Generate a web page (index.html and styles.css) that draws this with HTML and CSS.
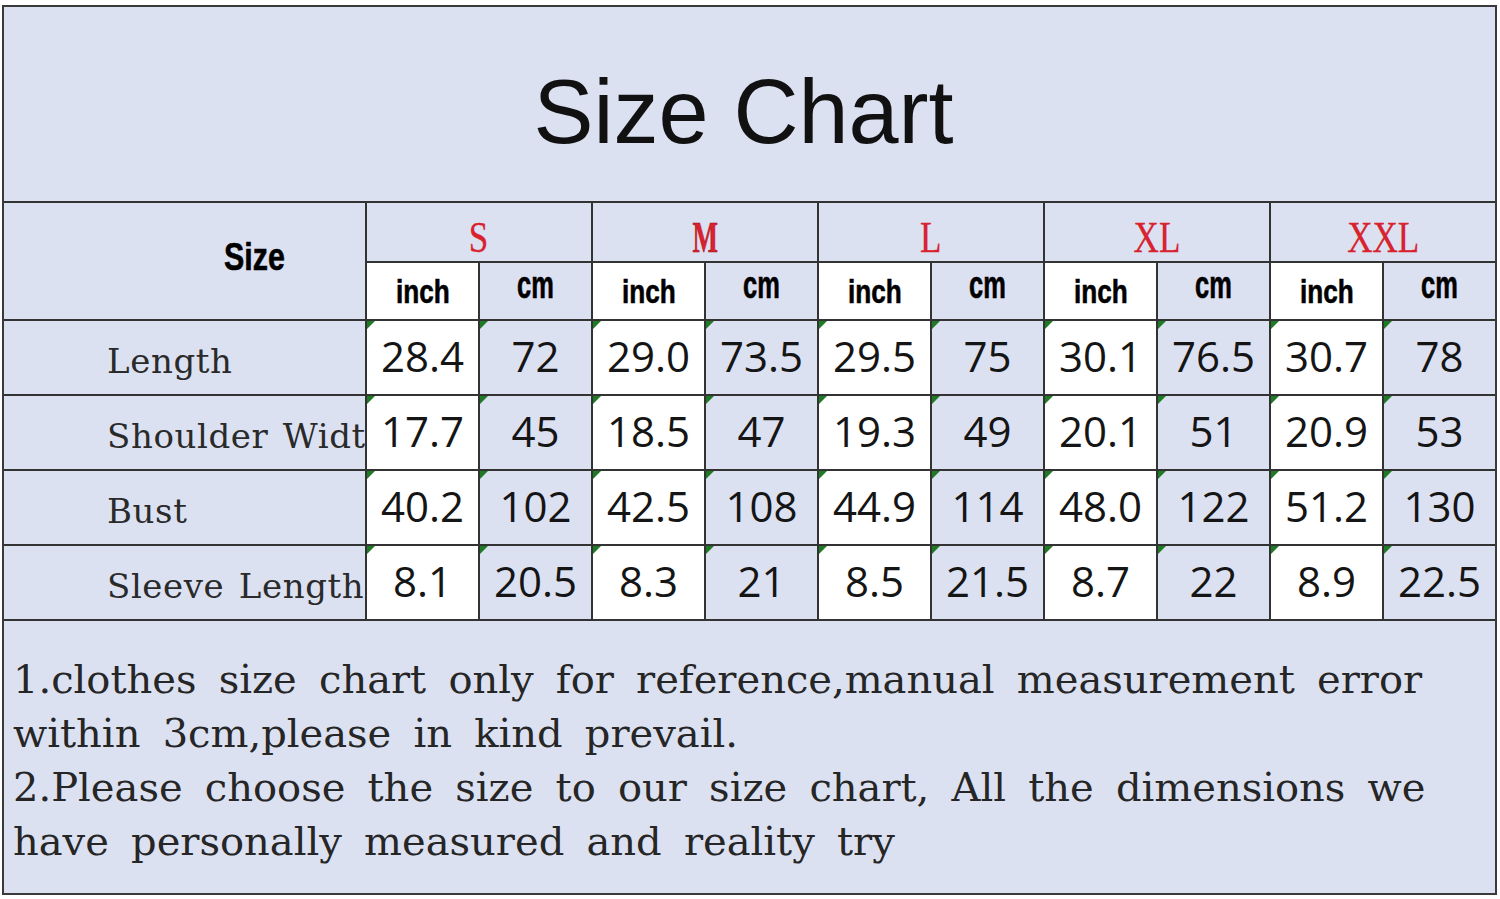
FILE: index.html
```html
<!DOCTYPE html>
<html lang="en">
<head>
<meta charset="utf-8">
<title>Size Chart</title>
<link rel="stylesheet" href="styles.css">
</head>
<body>
<div class="chart">
  <div class="title">Size Chart</div>
  <div class="grid">
    <div class="cell head-size"><span>Size</span></div>
    <div class="cell size-name"><span>S</span></div>
    <div class="cell size-name"><span class="bold-m">M</span></div>
    <div class="cell size-name"><span>L</span></div>
    <div class="cell size-name"><span>XL</span></div>
    <div class="cell size-name"><span>XXL</span></div>

    <div class="cell unit inch"><span>inch</span></div><div class="cell unit cm"><span>cm</span></div>
    <div class="cell unit inch"><span>inch</span></div><div class="cell unit cm"><span>cm</span></div>
    <div class="cell unit inch"><span>inch</span></div><div class="cell unit cm"><span>cm</span></div>
    <div class="cell unit inch"><span>inch</span></div><div class="cell unit cm"><span>cm</span></div>
    <div class="cell unit inch"><span>inch</span></div><div class="cell unit cm"><span>cm</span></div>

    <div class="cell label"><span>Length</span></div>
    <div class="cell num inch">28.4</div><div class="cell num cm">72</div>
    <div class="cell num inch">29.0</div><div class="cell num cm">73.5</div>
    <div class="cell num inch">29.5</div><div class="cell num cm">75</div>
    <div class="cell num inch">30.1</div><div class="cell num cm">76.5</div>
    <div class="cell num inch">30.7</div><div class="cell num cm">78</div>

    <div class="cell label"><span>Shoulder Width</span></div>
    <div class="cell num inch">17.7</div><div class="cell num cm">45</div>
    <div class="cell num inch">18.5</div><div class="cell num cm">47</div>
    <div class="cell num inch">19.3</div><div class="cell num cm">49</div>
    <div class="cell num inch">20.1</div><div class="cell num cm">51</div>
    <div class="cell num inch">20.9</div><div class="cell num cm">53</div>

    <div class="cell label"><span>Bust</span></div>
    <div class="cell num inch">40.2</div><div class="cell num cm">102</div>
    <div class="cell num inch">42.5</div><div class="cell num cm">108</div>
    <div class="cell num inch">44.9</div><div class="cell num cm">114</div>
    <div class="cell num inch">48.0</div><div class="cell num cm">122</div>
    <div class="cell num inch">51.2</div><div class="cell num cm">130</div>

    <div class="cell label"><span>Sleeve Length</span></div>
    <div class="cell num inch">8.1</div><div class="cell num cm">20.5</div>
    <div class="cell num inch">8.3</div><div class="cell num cm">21</div>
    <div class="cell num inch">8.5</div><div class="cell num cm">21.5</div>
    <div class="cell num inch">8.7</div><div class="cell num cm">22</div>
    <div class="cell num inch">8.9</div><div class="cell num cm">22.5</div>
  </div>
  <div class="notes">
    <p>1.clothes size chart only for reference,manual measurement error<br>within 3cm,please in kind prevail.</p>
    <p>2.Please choose the size to our size chart, All the dimensions we<br>have personally measured and reality try</p>
  </div>
</div>
</body>
</html>
```
FILE: styles.css
```css
html, body {
  margin: 0;
  padding: 0;
  background: #ffffff;
}

.chart {
  box-sizing: border-box;
  width: 1495px;
  margin: 5px 0 0 2px;
  border: 2px solid #3a3a3a;
  background: #dce1f2;
}

.title {
  box-sizing: border-box;
  height: 196px;
  border-bottom: 2px solid #333;
  display: flex;
  align-items: center;
  justify-content: center;
  padding: 15px 12px 0 0;
  font-family: "Liberation Sans", Arial, sans-serif;
  font-size: 90px;
  color: #111;
  line-height: 1;
}

.grid {
  display: grid;
  grid-template-columns: 361px repeat(10, 1fr);
  grid-template-rows: 58px 56px repeat(4, 73px);
  gap: 2px;
  background: #333;
}

.cell {
  position: relative;
  box-sizing: border-box;
  display: flex;
  align-items: center;
  justify-content: center;
  background: #dce1f2;
  overflow: hidden;
}

.inch {
  background: #ffffff;
}

.cm {
  background: #dce1f2;
}

.head-size {
  grid-row: span 2;
  justify-content: flex-start;
  padding: 0 0 9px 220px;
}

.head-size span {
  display: inline-block;
  font-family: "Liberation Sans", Arial, sans-serif;
  font-weight: bold;
  font-size: 38px;
  line-height: 1;
  color: #000;
  transform: scaleX(0.8);
  transform-origin: left center;
  -webkit-text-stroke: 0.6px #000;
}

.size-name {
  grid-column: span 2;
  padding-top: 10px;
}

.size-name span {
  display: inline-block;
  font-family: "Liberation Serif", "Times New Roman", serif;
  font-size: 45px;
  line-height: 1;
  color: #d8222e;
  transform: scaleX(0.78);
  -webkit-text-stroke: 0.3px #d8222e;
}

.size-name .bold-m {
  font-weight: bold;
  transform: scaleX(0.6);
  -webkit-text-stroke: 0.5px #9a1018;
}

.unit span {
  display: inline-block;
  font-family: "Liberation Sans", Arial, sans-serif;
  font-weight: bold;
  line-height: 1;
  color: #000;
  -webkit-text-stroke: 0.6px #000;
}

.unit.inch span {
  font-size: 34px;
  transform: scaleX(0.77);
}

.unit.cm {
  padding-bottom: 12px;
}

.unit.cm span {
  font-size: 38px;
  transform: scaleX(0.67);
}

.label {
  justify-content: flex-start;
  padding: 7px 0 0 103px;
  white-space: nowrap;
}

.label span {
  display: inline-block;
  font-family: "DejaVu Serif", "Liberation Serif", serif;
  font-size: 34px;
  letter-spacing: 0.6px;
  word-spacing: 3px;
  line-height: 1;
  color: #2a2a2a;
}

.num {
  font-family: "Open Sans", "Liberation Sans", sans-serif;
  font-size: 42px;
  line-height: 1;
  color: #151515;
  padding-bottom: 3px;
}

.num::before {
  content: "";
  position: absolute;
  top: 0;
  left: 0;
  border-top: 8px solid #1e7a24;
  border-right: 8px solid transparent;
}

.notes {
  box-sizing: border-box;
  height: 274px;
  border-top: 2px solid #333;
  padding: 31px 8px 0 9px;
  font-family: "DejaVu Serif", "Liberation Serif", serif;
  font-size: 40px;
  letter-spacing: 0;
  word-spacing: 9.5px;
  line-height: 54px;
  color: #262626;
  white-space: nowrap;
}

.notes p {
  margin: 0;
}
```
